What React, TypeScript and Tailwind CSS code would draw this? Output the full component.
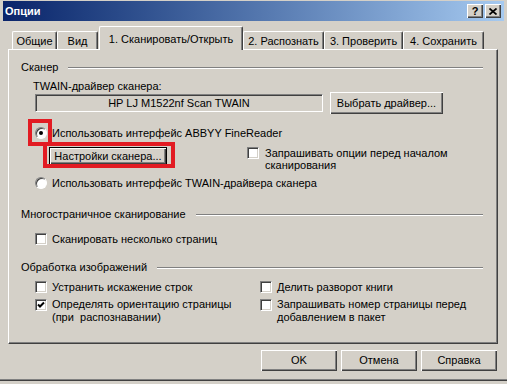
import React from "react";

type BoxProperties = {
  children?: React.ReactNode;
  className?: string;
};

type ToggleProperties = {
  checked?: boolean;
};

const RaisedButton: React.FC<BoxProperties> = ({ children, className }) => (
  <div
    className={`flex items-center justify-center bg-[#d4d0c8] shadow-[inset_1px_1px_0_#ffffff,inset_-1px_-1px_0_#404040,inset_-2px_-2px_0_#808080] ${className ?? ""}`}
  >
    {children}
  </div>
);

const Checkbox: React.FC<ToggleProperties> = ({ checked }) => (
  <span className="flex h-[12px] w-[12px] shrink-0 items-center justify-center border border-b-white border-l-[#808080] border-r-white border-t-[#808080] bg-white shadow-[inset_1px_1px_0_#404040,inset_-1px_-1px_0_#d4d0c8]">
    {checked && (
      <svg width="8" height="8" viewBox="0 0 8 8">
        <polyline
          points="1,3.5 3,5.5 7,1.5"
          fill="none"
          stroke="#000"
          strokeWidth="2"
        />
      </svg>
    )}
  </span>
);

const Radio: React.FC<ToggleProperties> = ({ checked }) => (
  <span className="flex h-[12px] w-[12px] shrink-0 items-center justify-center rounded-full border border-b-white border-l-[#808080] border-r-white border-t-[#808080] bg-white shadow-[inset_1px_1px_0_#404040]">
    {checked && <span className="h-[4px] w-[4px] rounded-full bg-black" />}
  </span>
);

const GroupTitle: React.FC<{ title: string }> = ({ title }) => (
  <div className="flex h-[14px] items-center">
    <span>{title}</span>
    <div className="ml-[10px] mt-[2px] h-[2px] flex-1 border-b border-t border-b-white border-t-[#808080]" />
  </div>
);

const Tab: React.FC<BoxProperties> = ({ children, className }) => (
  <div
    className={`flex h-[18px] justify-center rounded-t-[2px] border-l border-r border-t border-l-white border-r-[#404040] border-t-white bg-[#d4d0c8] pt-[3px] shadow-[inset_-1px_0_0_#808080] ${className ?? ""}`}
  >
    {children}
  </div>
);

const App: React.FC = () => {
  return (
    <div className="relative h-[384px] w-[507px] overflow-hidden bg-[#d4d0c8] font-['Liberation_Sans',Arial,sans-serif] text-[11px] leading-[13px] text-black">
      <div className="h-[381px] border-b border-b-[#404040] px-[3px] pt-[1px] shadow-[inset_0_-1px_0_#808080]">
        {/* Title bar */}
        <div className="flex h-[20px] items-center bg-linear-to-r from-[#0a246a] to-[#a6caf0] pl-[2px] pr-[3px]">
          <span className="font-bold text-white">Опции</span>
          <div className="ml-auto flex gap-[2px]">
            <RaisedButton className="h-[14px] w-[16px] text-[11px] font-bold">
              ?
            </RaisedButton>
            <RaisedButton className="h-[14px] w-[16px]">
              <svg width="8" height="7" viewBox="0 0 8 7">
                <path
                  d="M0.5 0.5 L7.5 6.5 M7.5 0.5 L0.5 6.5"
                  stroke="#000"
                  strokeWidth="1.7"
                />
              </svg>
            </RaisedButton>
          </div>
        </div>

        {/* Tabs */}
        <div className="flex h-[28px] items-end pl-[9px]">
          <Tab className="w-[45px]">Общие</Tab>
          <Tab className="w-[41px]">Вид</Tab>
          <div className="relative z-10 ml-[1px] flex h-[24px] w-[144px] translate-y-[1px] justify-center rounded-t-[2px] border-l border-r border-t border-l-white border-r-[#404040] border-t-white bg-[#d4d0c8] pt-[6px] shadow-[inset_-1px_0_0_#808080]">
            1. Сканировать/Открыть
          </div>
          <Tab className="w-[81px]">2. Распознать</Tab>
          <Tab className="w-[79px]">3. Проверить</Tab>
          <Tab className="w-[81px]">4. Сохранить</Tab>
        </div>

        {/* Tab panel */}
        <div className="ml-[5px] h-[295px] w-[490px] border-b border-l border-r border-t border-b-[#404040] border-l-white border-r-[#404040] border-t-white pl-[12px] pr-[14px] pt-[10px] shadow-[inset_-1px_-1px_0_#808080]">
          <GroupTitle title="Сканер" />
          <div className="ml-[12px] mt-[6px] flex h-[12px] items-center">
            TWAIN-драйвер сканера:
          </div>
          <div className="ml-[14px] flex h-[22px] items-center">
            <div className="flex h-[18px] w-[288px] items-center justify-center border border-b-white border-l-[#808080] border-r-white border-t-[#808080] shadow-[inset_1px_1px_0_#404040]">
              HP LJ M1522nf Scan TWAIN
            </div>
            <RaisedButton className="ml-[7px] h-[22px] w-[113px]">
              Выбрать драйвер...
            </RaisedButton>
          </div>
          <div className="ml-[14px] mt-[11px] flex h-[16px] items-center gap-[5px]">
            <Radio checked />
            <span>Использовать интерфейс ABBYY FineReader</span>
          </div>
          <div className="mt-[6px] flex h-[24px]">
            <div className="w-[226px] pl-[28px]">
              <RaisedButton className="h-[18px] w-[118px] border border-black">
                Настройки сканера...
              </RaisedButton>
            </div>
            <div className="flex gap-[6px]">
              <Checkbox />
              <div className="leading-[12px]">
                Запрашивать опции перед началом
                <br />
                сканирования
              </div>
            </div>
          </div>
          <div className="ml-[14px] mt-[5px] flex h-[14px] items-center gap-[5px]">
            <Radio />
            <span>Использовать интерфейс TWAIN-драйвера сканера</span>
          </div>

          <div className="mt-[17px]">
            <GroupTitle title="Многостраничное сканирование" />
          </div>
          <div className="ml-[14px] mt-[11px] flex h-[14px] items-center gap-[5px]">
            <Checkbox />
            <span>Сканировать несколько страниц</span>
          </div>

          <div className="mt-[14px]">
            <GroupTitle title="Обработка изображений" />
          </div>
          <div className="ml-[14px] mt-[6px] flex h-[14px] items-center">
            <div className="flex w-[225px] items-center gap-[5px]">
              <Checkbox />
              <span>Устранить искажение строк</span>
            </div>
            <div className="flex items-center gap-[5px]">
              <Checkbox />
              <span>Делить разворот книги</span>
            </div>
          </div>
          <div className="ml-[14px] mt-[4px] flex">
            <div className="flex w-[225px] gap-[5px]">
              <div className="pt-[1px]">
                <Checkbox checked />
              </div>
              <div>
                Определять ориентацию страницы
                <br />
                (при{"\u00a0"} распознавании)
              </div>
            </div>
            <div className="flex gap-[5px]">
              <div className="pt-[1px]">
                <Checkbox />
              </div>
              <div>
                Запрашивать номер страницы перед
                <br />
                добавлением в пакет
              </div>
            </div>
          </div>
        </div>

        {/* Dialog buttons */}
        <div className="mt-[6px] flex justify-end gap-[4px] pr-[7px]">
          <RaisedButton className="h-[21px] w-[76px]">OK</RaisedButton>
          <RaisedButton className="h-[21px] w-[76px]">Отмена</RaisedButton>
          <RaisedButton className="h-[21px] w-[76px]">Справка</RaisedButton>
        </div>
      </div>

      {/* Red highlight marks */}
      <div className="absolute left-[28px] top-[119px] h-[27px] w-[24px] border-[4px] border-[#e21b23]" />
      <div className="absolute left-[43px] top-[142px] h-[26px] w-[132px] border-[4px] border-[#e21b23]" />
    </div>
  );
};

export default App;
